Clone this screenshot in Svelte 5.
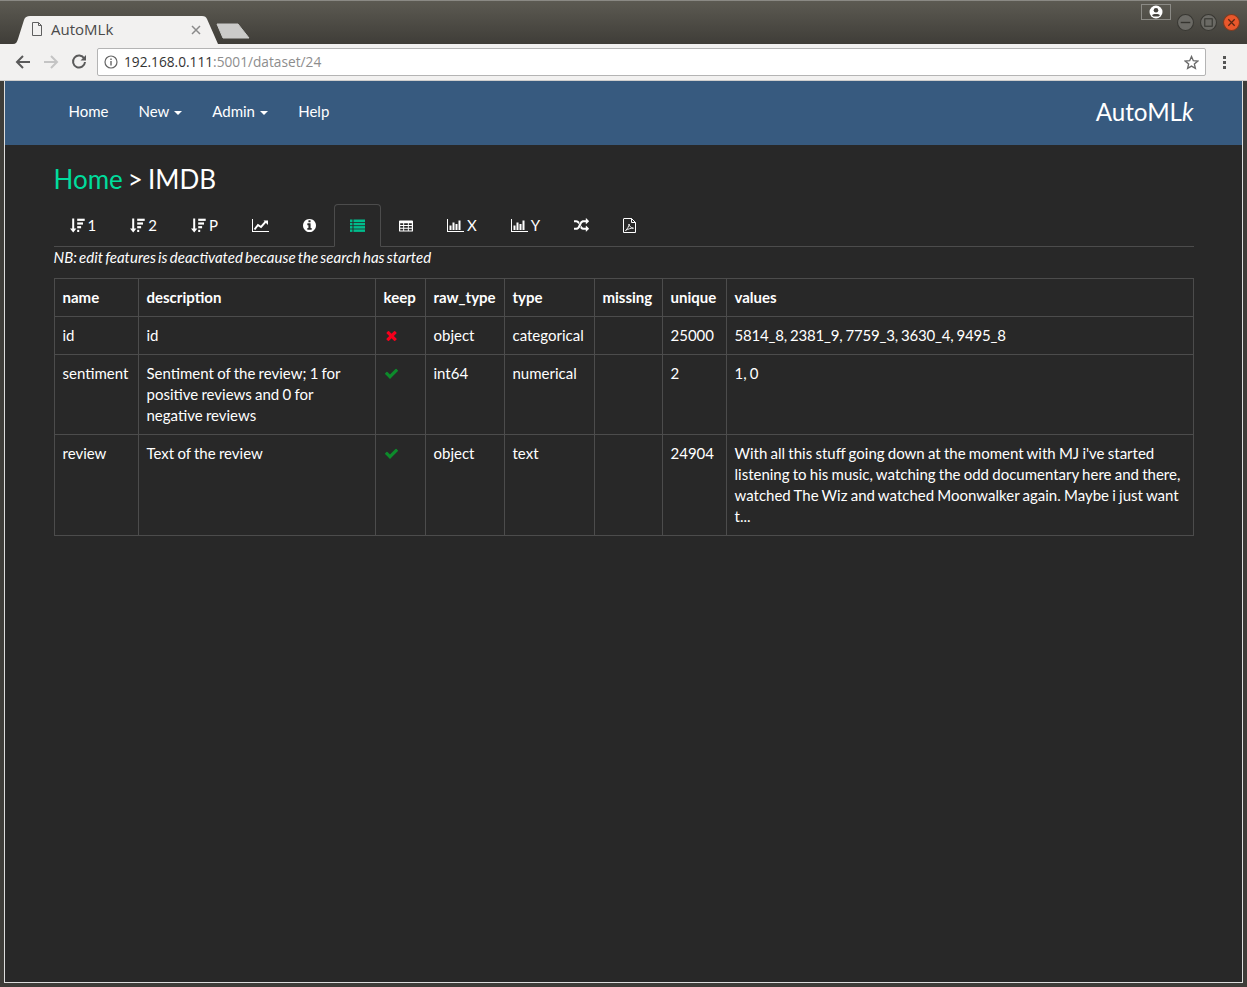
<script>
  const tabs = [
    { icon: "sort", label: "1" },
    { icon: "sort", label: "2" },
    { icon: "sort", label: "P" },
    { icon: "line" },
    { icon: "info" },
    { icon: "list", active: true },
    { icon: "table" },
    { icon: "bar", label: "X" },
    { icon: "bar", label: "Y" },
    { icon: "random" },
    { icon: "pdf" }
  ];

  const columns = [
    ["name", 84],
    ["description", 237],
    ["keep", 50],
    ["raw_type", 79],
    ["type", 90],
    ["missing", 68],
    ["unique", 64],
    ["values", 467]
  ];

  const rows = [
    {
      name: "id",
      description: "id",
      keep: false,
      raw_type: "object",
      type: "categorical",
      unique: "25000",
      values: "5814_8, 2381_9, 7759_3, 3630_4, 9495_8",
      compact: true
    },
    {
      name: "sentiment",
      description: "Sentiment of the review; 1 for positive reviews and 0 for negative reviews",
      keep: true,
      raw_type: "int64",
      type: "numerical",
      unique: "2",
      values: "1, 0"
    },
    {
      name: "review",
      description: "Text of the review",
      keep: true,
      raw_type: "object",
      type: "text",
      unique: "24904",
      values: "With all this stuff going down at the moment with MJ i've started listening to his music, watching the odd documentary here and there, watched The Wiz and watched Moonwalker again. Maybe i just want t..."
    }
  ];
</script>

<div class="window">
  <div class="titlebar">
    <div class="tab">
      <svg class="tab-shape" width="206" height="28" viewBox="0 0 206 28"><path d="M0 28 C3 28 4 26 5 23 L11 4 C12 1 14 0 17 0 H189 C192 0 193 1 194 3 L205 28 Z" fill="#f2f1f0" /></svg>
      <svg class="page-icon" width="12" height="14" viewBox="0 0 12 14"><path d="M1.500 .500 H7.500 L10.500 3.500 V13.500 H1.500 Z M7.500 .500 V3.500 H10.500" fill="none" stroke="#5f5f5f" /></svg>
      <span class="tab-title">AutoMLk</span>
      <svg class="tab-close" width="10" height="10" viewBox="0 0 10 10"><path d="M1 1 L9 9 M9 1 L1 9" stroke="#8a8a8a" stroke-width="1.500" /></svg>
    </div>
    <svg class="new-tab" width="34" height="16" viewBox="0 0 34 16"><path d="M1 1 H22 L33 15 H7 Z" fill="#cbcbc9" stroke="#cbcbc9" stroke-linejoin="round" /></svg>
    <div class="window-controls">
      <div class="profile">
        <svg width="14" height="14" viewBox="0 0 14 14"><circle cx="7" cy="7" r="6.500" fill="#fff" /><circle cx="7" cy="5.200" r="2.300" fill="#45433e" /><path d="M3 10.300 C4 8.600 10 8.600 11 10.300 L9.500 11.500 H4.500 Z" fill="#45433e" /></svg>
      </div>
      <span class="win-btn"><svg width="17" height="17" viewBox="0 0 16 16"><circle cx="8" cy="8" r="7.500" fill="#6b6a65" stroke="#383732" /><path d="M3.500 8 H12.500" stroke="#35342f" stroke-width="1.300" /></svg></span>
      <span class="win-btn"><svg width="17" height="17" viewBox="0 0 16 16"><circle cx="8" cy="8" r="7.500" fill="#6b6a65" stroke="#383732" /><rect x="4.500" y="4.500" width="7" height="7" fill="none" stroke="#35342f" /></svg></span>
      <span class="win-btn"><svg width="17" height="17" viewBox="0 0 16 16"><circle cx="8" cy="8" r="7.500" fill="#e9572b" stroke="#7e3a20" /><path d="M5 5 L11 11 M11 5 L5 11" stroke="#5a2612" stroke-width="1.200" /></svg></span>
    </div>
  </div>

  <div class="toolbar">
    <svg class="nav-icon" width="16" height="16" viewBox="0 0 16 16"><path d="M15 8 H2 M8 2 L2 8 L8 14" fill="none" stroke="#5a5a5a" stroke-width="2" /></svg>
    <svg class="nav-icon" width="16" height="16" viewBox="0 0 16 16"><path d="M15 8 H2 M8 2 L2 8 L8 14" transform="translate(16 0) scale(-1 1)" fill="none" stroke="#c4c4c4" stroke-width="2" /></svg>
    <svg class="nav-icon" width="16" height="16" viewBox="0 0 16 16"><path d="M13.200 4.500 A6 6 0 1 0 14 8" fill="none" stroke="#5a5a5a" stroke-width="2" /><path d="M9.500 6.500 H15 V1 Z" fill="#5a5a5a" /></svg>
    <div class="omnibox">
      <svg width="14" height="14" viewBox="0 0 14 14"><circle cx="7" cy="7" r="6" fill="none" stroke="#666" stroke-width="1.200" /><rect x="6.300" y="6" width="1.400" height="4.500" fill="#666" /><rect x="6.300" y="3.500" width="1.400" height="1.500" fill="#666" /></svg>
      <span class="url"><span class="host">192.168.0.111</span>:5001/dataset/24</span>
      <svg class="star" width="15" height="15" viewBox="0 0 24 24"><path d="M12 2.500 L14.900 9.100 L22 9.800 L16.600 14.500 L18.200 21.500 L12 17.800 L5.800 21.500 L7.400 14.500 L2 9.800 L9.100 9.100 Z" fill="none" stroke="#6a6a6a" stroke-width="2.200" /></svg>
    </div>
    <div class="kebab"><i></i><i></i><i></i></div>
  </div>

  <div class="page">
    <nav class="navbar">
      <div class="container nav-inner">
        <ul class="nav-links">
          <li>Home</li>
          <li>New <span class="caret"></span></li>
          <li>Admin <span class="caret"></span></li>
          <li>Help</li>
        </ul>
        <span class="brand">AutoML<em>k</em></span>
      </div>
    </nav>

    <div class="container">
      <h3 class="heading"><span class="home-link">Home</span> &gt; IMDB</h3>

      <ul class="nav-tabs">
        {#each tabs as t}
          <li class:active={t.active}>
            {#if t.icon === "sort"}
              <svg class="fa" width="15" height="15" viewBox="0.800 0 15 15"><path d="M3 0.500 H5 V10.500 H7.200 L4 14.500 L.800 10.500 H3 Z" /><rect x="8" y=".700" width="7.500" height="2.200" /><rect x="8" y="4.400" width="5.800" height="2.200" /><rect x="8" y="8.100" width="3.900" height="2.200" /><rect x="8" y="11.800" width="2" height="2.200" /></svg>
            {:else if t.icon === "line"}
              <svg class="fa" width="17" height="15" viewBox="0 0 17 15"><path d="M0 1 H1 V13 H17 V14 H0 Z" /><path d="M2.500 11.500 L6 7 L9 9 L13.700 3.700" fill="none" stroke="#fff" stroke-width="2" /><path d="M11.500 2.500 H16 V7 Z" /></svg>
            {:else if t.icon === "info"}
              <svg class="fa" width="13" height="15" viewBox="0 128 1536 1536"><path transform="translate(-128 0)" d="M1152 1376v-160q0-14-9-23t-23-9h-96v-512q0-14-9-23t-23-9h-320q-14 0-23 9t-9 23v160q0 14 9 23t23 9h96v320h-96q-14 0-23 9t-9 23v160q0 14 9 23t23 9h448q14 0 23-9t9-23zm-128-896v-160q0-14-9-23t-23-9h-192q-14 0-23 9t-9 23v160q0 14 9 23t23 9h192q14 0 23-9t9-23zm640 416q0 209-103 385.500t-279.500 279.500-385.500 103-385.500-103-279.500-279.500-103-385.500 103-385.500 279.500-279.500 385.500-103 385.500 103 279.500 279.500 103 385.500z" /></svg>
            {:else if t.icon === "list"}
              <svg class="fa" width="15" height="15" viewBox="0 0 15 15"><rect x="0" y="1.500" width="2.500" height="2.500" /><rect x="3.500" y="1.500" width="11.500" height="2.500" /><rect x="0" y="4.800" width="2.500" height="2.500" /><rect x="3.500" y="4.800" width="11.500" height="2.500" /><rect x="0" y="8.100" width="2.500" height="2.500" /><rect x="3.500" y="8.100" width="11.500" height="2.500" /><rect x="0" y="11.400" width="2.500" height="2.500" /><rect x="3.500" y="11.400" width="11.500" height="2.500" /></svg>
            {:else if t.icon === "table"}
              <svg class="fa" width="14" height="14" viewBox="0 0 15 15"><path fill-rule="evenodd" d="M1 1.500 H14 Q15 1.500 15 2.500 V12.500 Q15 13.500 14 13.500 H1 Q0 13.500 0 12.500 V2.500 Q0 1.500 1 1.500 Z M1.300 4.500 V6.500 H4.500 V4.500 Z M5.500 4.500 V6.500 H9.500 V4.500 Z M10.500 4.500 V6.500 H13.700 V4.500 Z M1.300 7.500 V9.500 H4.500 V7.500 Z M5.500 7.500 V9.500 H9.500 V7.500 Z M10.500 7.500 V9.500 H13.700 V7.500 Z M1.300 10.500 V12.300 H4.500 V10.500 Z M5.500 10.500 V12.300 H9.500 V10.500 Z M10.500 10.500 V12.300 H13.700 V10.500 Z" /></svg>
            {:else if t.icon === "bar"}
              <svg class="fa" width="17" height="15" viewBox="0 0 17 15"><path d="M0 1 H1 V13 H17 V14 H0 Z" /><rect x="2.500" y="7.500" width="2" height="4.500" /><rect x="5.500" y="4.500" width="2" height="7.500" /><rect x="8.500" y="6" width="2" height="6" /><rect x="11.500" y="2.500" width="2" height="9.500" /></svg>
            {:else if t.icon === "random"}
              <svg class="fa" width="15" height="15" viewBox="0 128 1792 1536"><path d="M666 481q-60 92-137 273-22-45-37-72.500t-40.500-63.500-51-56.500-63-35-81.500-14.500h-224q-14 0-23-9t-9-23v-192q0-14 9-23t23-9h224q250 0 410 225zm1126 799q0 14-9 23l-320 320q-9 9-23 9-13 0-22.500-9.500t-9.500-22.500v-192q-32 0-85 .5t-81 1-73-1-71-5-64-10.500-63-18.500-58-28.500-59-40-55-53.500-56-69.500q59-93 136-273 22 45 37 72.500t40.500 63.500 51 56.500 63 35 81.500 14.500h256v-192q0-14 9-23t23-9q12 0 24 10l319 319q9 9 9 23zm0-896q0 14-9 23l-320 320q-9 9-23 9-13 0-22.500-9.500t-9.500-22.500v-192h-256q-48 0-87 15t-69 45-51 61.500-45 77.500q-32 62-78 171-29 66-49.500 111t-54 105-64 100-74 83-90 68.500-106.500 42-128 16.500h-224q-14 0-23-9t-9-23v-192q0-14 9-23t23-9h224q48 0 87-15t69-45 51-61.500 45-77.500q32-62 78-171 29-66 49.500-111t54-105 64-100 74-83 90-68.500 106.500-42 128-16.500h256v-192q0-14 9-23t23-9q12 0 24 10l319 319q9 9 9 23z" /></svg>
            {:else if t.icon === "pdf"}
              <svg class="fa" width="13" height="15" viewBox="0 0 13 15"><path d="M1 .500 H8.500 L12.500 4.500 V14.500 H.500 V.500 M8.500 .500 V4.500 H12.500" fill="none" stroke="#fff" /><path d="M2.500 12.500 C4.500 11 6 8 6 6 C6.500 8.500 8 10 10.500 10.200 C8 10 5 11 2.500 12.500 Z" fill="none" stroke="#fff" stroke-width=".900" /></svg>
            {/if}
            {#if t.label}<span class="tab-label">{t.label}</span>{/if}
          </li>
        {/each}
      </ul>

      <p class="note"><em>NB: edit features is deactivated because the search has started</em></p>

      <table class="features">
        <colgroup>
          {#each columns as c}
            <col style="width: {c[1]}px" />
          {/each}
        </colgroup>
        <thead>
          <tr>
            {#each columns as c}
              <th>{c[0]}</th>
            {/each}
          </tr>
        </thead>
        <tbody>
          {#each rows as row}
            <tr>
              <td>{row.name}</td>
              <td>{row.description}</td>
              <td>
                {#if row.keep}
                  <svg class="mark" width="15" height="15" viewBox="0 128 1792 1536"><path fill="#0d8a2b" d="M1671 566q0 40-28 68l-724 724-136 136q-28 28-68 28t-68-28l-136-136-362-362q-28-28-28-68t28-68l136-136q28-28 68-28t68 28l294 295 656-657q28-28 68-28t68 28l136 136q28 28 28 68z" /></svg>
                {:else}
                  <svg class="mark cross" width="12" height="15" viewBox="128 128 1408 1536"><path fill="#f5001c" d="M1490 1322q0 40-28 68l-136 136q-28 28-68 28t-68-28l-294-294-294 294q-28 28-68 28t-68-28l-136-136q-28-28-28-68t28-68l294-294-294-294q-28-28-28-68t28-68l136-136q28-28 68-28t68 28l294 294 294-294q28-28 68-28t68 28l136 136q28 28 28 68t-28 68l-294 294 294 294q28 28 28 68z" /></svg>
                {/if}
              </td>
              <td>{row.raw_type}</td>
              <td>{row.type}</td>
              <td></td>
              <td>{row.unique}</td>
              <td class:compact={row.compact}>{row.values}</td>
            </tr>
          {/each}
        </tbody>
      </table>
    </div>
  </div>
</div>

<style>
  :global(body) {
    margin: 0;
    background: #3e3d39;
  }

  .window {
    height: 987px;
    box-sizing: border-box;
    display: flex;
    flex-direction: column;
    padding: 0 4px 4px;
    background: #3e3d39;
    border-top: 1px solid #8a8984;
    font-family: "Lato", sans-serif;
    font-size: 15px;
    line-height: 21px;
    word-spacing: -0.6px;
    color: #fff;
  }

  .titlebar {
    height: 43px;
    margin: 0 -4px;
    display: flex;
    align-items: flex-end;
    background: linear-gradient(#5c5a52, #3f3d38);
    padding-left: 13px;
  }

  .tab {
    position: relative;
    width: 206px;
    height: 28px;
    display: flex;
    align-items: center;
    padding-bottom: 2px;
    box-sizing: border-box;
    font-family: "Open Sans", sans-serif;
    font-size: 15px;
    color: #4a4a4a;
  }

  .tab-shape {
    position: absolute;
    left: 0;
    top: 0;
  }

  .page-icon {
    position: relative;
    margin-left: 18px;
  }

  .tab-title {
    position: relative;
    margin-left: 8px;
  }

  .tab-close {
    position: absolute;
    left: 178px;
    top: 9px;
  }

  .new-tab {
    margin: 0 0 5px -3px;
  }

  .window-controls {
    margin-left: auto;
    align-self: flex-start;
    display: flex;
    align-items: flex-start;
    padding: 3px 7px 0 0;
    gap: 6px;
  }

  .profile {
    width: 28px;
    height: 14px;
    border: 1px solid #8b8a85;
    display: flex;
    justify-content: center;
    overflow: hidden;
  }

  .win-btn {
    display: block;
    height: 17px;
    margin-top: 10px;
  }

  .toolbar {
    height: 36px;
    margin: 0 -4px;
    padding: 0 0 0 15px;
    display: flex;
    align-items: center;
    background: #f2f1f0;
    border-bottom: 1px solid #cfcecd;
    box-sizing: content-box;
  }

  .nav-icon {
    margin-right: 12px;
    flex: none;
  }

  .nav-icon:nth-child(3) {
    margin-right: 10px;
  }

  .omnibox {
    width: 1109px;
    height: 28px;
    box-sizing: border-box;
    background: #fff;
    border: 1px solid #b4b4b4;
    border-radius: 2px;
    display: flex;
    align-items: center;
    padding: 0 6px;
  }

  .url {
    margin-left: 6px;
    font-family: "Open Sans", sans-serif;
    font-size: 13.7px;
    color: #8d8d8d;
    position: relative;
    top: -1px;
  }

  .host {
    color: #333;
  }

  .star {
    margin-left: auto;
  }

  .kebab {
    margin-left: 17px;
    display: flex;
    flex-direction: column;
    gap: 2px;
  }

  .kebab i {
    display: block;
    width: 3px;
    height: 3px;
    background: #555;
  }

  .page {
    flex: 1;
    background: #282828;
    border-left: 1px solid #ddd;
    border-right: 1px solid #ddd;
    border-bottom: 1px solid #ddd;
  }

  .container {
    width: 1170px;
    box-sizing: border-box;
    margin: 0 auto;
    padding: 0 15px;
  }

  .navbar {
    height: 64px;
    box-sizing: border-box;
    padding-bottom: 4px;
    background: #375a7f;
  }

  .nav-inner {
    height: 100%;
    display: flex;
    align-items: center;
    justify-content: space-between;
  }

  .nav-links {
    list-style: none;
    margin: 0;
    padding: 0;
    display: flex;
  }

  .nav-links li {
    padding: 0 15px;
  }

  .caret {
    display: inline-block;
    width: 0;
    height: 0;
    margin-left: 2px;
    vertical-align: middle;
    border-top: 4px solid #fff;
    border-left: 4px solid transparent;
    border-right: 4px solid transparent;
  }

  .brand {
    font-size: 24.2px;
    word-spacing: 0;
  }

  .heading {
    margin: 18px 0 9px;
    font-size: 26px;
    font-weight: 400;
    line-height: 32px;
    word-spacing: -1.6px;
  }

  .home-link {
    color: #00dc9c;
  }

  .nav-tabs {
    list-style: none;
    margin: 0;
    padding: 0;
    display: flex;
    border-bottom: 1px solid #4c4c4c;
  }

  .nav-tabs li {
    margin: 0 2px -1px 0;
    padding: 10px 15px;
    height: 21px;
    display: flex;
    align-items: center;
    border: 1px solid transparent;
    border-radius: 4px 4px 0 0;
  }

  .nav-tabs li.active {
    color: #00bc8c;
    border-color: #4c4c4c #4c4c4c #282828;
    background: #282828;
  }

  .tab-label {
    margin-left: 3px;
  }

  .fa {
    fill: currentColor;
    flex: none;
  }

  .note {
    margin: 0 0 10px;
    word-spacing: -1.3px;
  }

  .features {
    width: 1139px;
    table-layout: fixed;
    border-collapse: collapse;
  }

  .features th,
  .features td {
    padding: 8px;
    border: 1px solid #4c4c4c;
    text-align: left;
    vertical-align: top;
  }

  .features td.compact {
    letter-spacing: -0.19px;
  }

  .features th {
    font-weight: 700;
  }

  .mark {
    display: block;
    margin-top: 3px;
  }

  .mark.cross {
    margin-left: 1px;
  }
</style>
